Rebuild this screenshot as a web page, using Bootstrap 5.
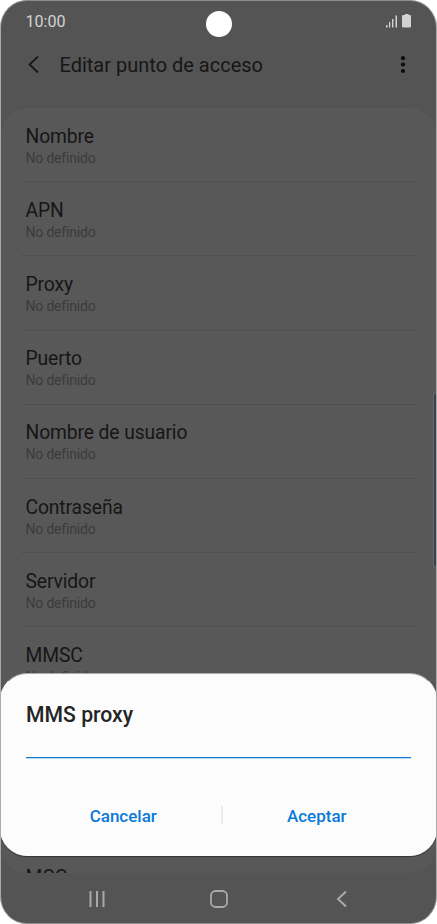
<!DOCTYPE html>
<html lang="es">
<head>
<meta charset="utf-8">
<meta name="viewport" content="width=device-width, initial-scale=1">
<title>Editar punto de acceso</title>
<link href="https://cdn.jsdelivr.net/npm/bootstrap@5.3.0/dist/css/bootstrap.min.css" rel="stylesheet">
<style>
body{font-family:Roboto,"Liberation Sans",sans-serif;background:#fff;color:#161616}
.phone{width:437px;height:924px;background:#545454;border:1px solid #8b8d8c;border-left-color:#a9abaa;border-right-color:#a9abaa;border-radius:27px}
.statusbar{height:42px;padding:0 24px 0 24.500px;color:#d2d2d2;font-size:16.1px}
.statusbar svg{margin-top:-2px}
.camera{width:26px;height:26px;left:204.500px;top:10px;background:#fff}
.titlebar{height:44px;padding:0 30px 0 26px}
.heading{font-size:20px;line-height:24px;font-weight:400;margin-left:20.500px}
.settings{height:766px;margin-top:20px;border-radius:26px;background:#585858;border-top:1px solid #535353}
.setting{height:74.2px;padding:16.600px 5px 0 4.500px;margin:0 20px;background:transparent;color:#161616;border:0;border-bottom:1px solid #505050;border-radius:0}
.setting-name{font-size:19.3px;line-height:24px;letter-spacing:-.11px}
.setting-value{font-size:14px;line-height:18px;letter-spacing:-.18px;color:#3b3b3b}
.sheet{left:-1px;right:-1px;top:672px;height:183px;border:1px solid #fcfcfc;border-top-color:#aaa;border-radius:27px;background:#fcfcfc;padding:28px 25px 0;color:#252525;box-shadow:0 1px 1px #353535}
.sheet-title{font-size:21.2px;line-height:26px;font-weight:500}
.entry{height:30px;padding:0;border:0;border-bottom:1px solid #1878ce;border-radius:0;background:transparent;box-shadow:0 1px #b9d9f3}
.actions{margin:45px -3px 0 3px}
.actions .col{padding-right:3px}
.action{font-size:17px;line-height:22px;font-weight:500;color:#0b79d9;padding:0;border:0}
.divider{width:2px;height:18px;background:#ececec}
.edge{left:432px;top:391px;width:4px;height:176px;background:#3c3b48;border:1px solid #68686f;border-right:0;border-radius:4px 0 0 4px}
.navkeys{height:50px;padding:2px 89px 0 87px}
.home-key{margin-left:-3px}
svg{display:block}
</style>
<script src="https://cdn.jsdelivr.net/npm/bootstrap@5.3.0/dist/js/bootstrap.bundle.min.js"></script>
</head>
<body class="overflow-hidden">
<main class="phone position-relative overflow-hidden d-flex flex-column">
  <header>
    <div class="statusbar d-flex align-items-center justify-content-between">
      <span>10:00</span>
      <svg width="27" height="14" viewBox="0 0 27 14" fill="#d2d2d2"><path d="M1 11h1.500v2.500H1zM4 8h1.300v5.500H4zM7 5h1.400v8.500H7zM10.500 1.500h1.500v12h-1.500z"/><path d="M20 1V0h3.500v1H25q1 0 1 1v10.500q0 1-1 1h-7q-1 0-1-1V2q0-1 1-1z"/></svg>
    </div>
    <div class="camera position-absolute rounded-circle"></div>
    <div class="titlebar d-flex align-items-center">
      <svg width="12" height="18" viewBox="0 0 12 18" fill="none" stroke="#161616" stroke-width="1.800"><path d="M11 .5 2.500 8.500l8.500 8"/></svg>
      <h1 class="heading mb-0">Editar punto de acceso</h1>
      <svg class="ms-auto" width="6" height="18" viewBox="0 0 6 18" fill="#0c0c0c"><circle cx="3" cy="2.200" r="2.100"/><circle cx="3" cy="8.500" r="2.100"/><circle cx="3" cy="15" r="2.100"/></svg>
    </div>
  </header>
  <div class="settings list-group flex-shrink-0 overflow-hidden">
    <div class="setting list-group-item flex-shrink-0"><div class="setting-name">Nombre</div><div class="setting-value">No definido</div></div>
    <div class="setting list-group-item flex-shrink-0"><div class="setting-name">APN</div><div class="setting-value">No definido</div></div>
    <div class="setting list-group-item flex-shrink-0"><div class="setting-name">Proxy</div><div class="setting-value">No definido</div></div>
    <div class="setting list-group-item flex-shrink-0"><div class="setting-name">Puerto</div><div class="setting-value">No definido</div></div>
    <div class="setting list-group-item flex-shrink-0"><div class="setting-name">Nombre de usuario</div><div class="setting-value">No definido</div></div>
    <div class="setting list-group-item flex-shrink-0"><div class="setting-name">Contraseña</div><div class="setting-value">No definido</div></div>
    <div class="setting list-group-item flex-shrink-0"><div class="setting-name">Servidor</div><div class="setting-value">No definido</div></div>
    <div class="setting list-group-item flex-shrink-0"><div class="setting-name">MMSC</div><div class="setting-value">No definido</div></div>
    <div class="setting list-group-item flex-shrink-0"></div>
    <div class="setting list-group-item flex-shrink-0"></div>
    <div class="setting list-group-item flex-shrink-0"><div class="setting-name">MCC</div></div>
  </div>
  <nav class="navkeys d-flex align-items-center justify-content-between">
    <svg width="17" height="18" viewBox="0 0 17 18" fill="none" stroke="#a9a9a9" stroke-width="2"><path d="M2.500 1v16M9 1v16M15.500 1v16"/></svg>
    <svg class="home-key" width="18" height="18" viewBox="0 0 18 18" fill="none" stroke="#a9a9a9" stroke-width="1.800"><rect x="1" y="1" width="16" height="16" rx="4.500"/></svg>
    <svg width="11" height="18" viewBox="0 0 11 18" fill="none" stroke="#a9a9a9" stroke-width="2"><path d="M10 1.500 2 9l8 7.500"/></svg>
  </nav>
  <div class="edge position-absolute"></div>
  <section class="sheet position-absolute" role="dialog" aria-label="MMS proxy">
    <h2 class="sheet-title mb-0">MMS proxy</h2>
    <input class="entry form-control" type="text" aria-label="MMS proxy">
    <div class="actions d-flex align-items-center">
      <div class="col text-center"><button class="action btn">Cancelar</button></div>
      <div class="divider"></div>
      <div class="col text-center"><button class="action btn">Aceptar</button></div>
    </div>
  </section>
</main>
</body>
</html>
